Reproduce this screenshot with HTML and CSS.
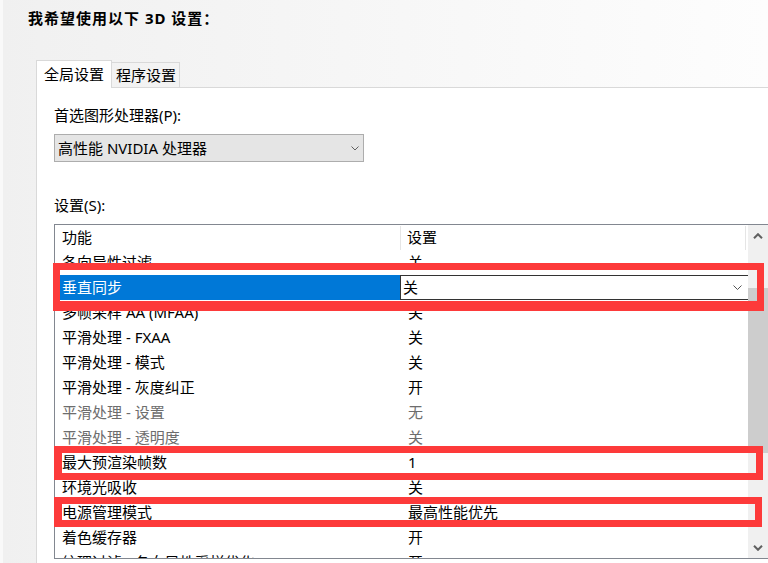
FILE: index.html
```html
<!DOCTYPE html>
<html lang="zh-CN">
<head>
<meta charset="utf-8">
<title>3D 设置</title>
<link rel="stylesheet" href="styles.css">
</head>
<body>
<div class="page">
  <h1 class="title">我希望使用以下 3D 设置：</h1>
  <div class="tabbar">
    <div class="tab active">全局设置</div>
    <div class="tab">程序设置</div>
  </div>
  <div class="panel">
    <div class="label">首选图形处理器(P):</div>
    <div class="select">
      <span>高性能 NVIDIA 处理器</span>
      <svg class="chev" width="8" height="5" viewBox="0 0 8 5"><polyline points="0.5,0.5 4,4 7.5,0.5" fill="none" stroke="#606060" stroke-width="1"/></svg>
    </div>
    <div class="label second">设置(S):</div>
    <div class="listbox">
      <div class="list">
        <div class="head">
          <div class="hc name">功能</div>
          <div class="sep"></div>
          <div class="hc val">设置</div>
          <div class="sep"></div>
          <div></div>
        </div>
        <div class="row"><div class="name">各向异性过滤</div><div class="val">关</div></div>
        <div class="row sel"><div class="name">垂直同步</div><div class="val"><span>关</span><svg width="9" height="5" viewBox="0 0 9 5"><polyline points="0.5,0.5 4.5,4.5 8.5,0.5" fill="none" stroke="#555" stroke-width="1"/></svg></div></div>
        <div class="row"><div class="name">多帧采样 AA (MFAA)</div><div class="val">关</div></div>
        <div class="row"><div class="name">平滑处理 - FXAA</div><div class="val">关</div></div>
        <div class="row"><div class="name">平滑处理 - 模式</div><div class="val">关</div></div>
        <div class="row"><div class="name">平滑处理 - 灰度纠正</div><div class="val">开</div></div>
        <div class="row dim"><div class="name">平滑处理 - 设置</div><div class="val">无</div></div>
        <div class="row dim"><div class="name">平滑处理 - 透明度</div><div class="val">关</div></div>
        <div class="row"><div class="name">最大预渲染帧数</div><div class="val">1</div></div>
        <div class="row"><div class="name">环境光吸收</div><div class="val">关</div></div>
        <div class="row"><div class="name">电源管理模式</div><div class="val">最高性能优先</div></div>
        <div class="row"><div class="name">着色缓存器</div><div class="val">开</div></div>
        <div class="row"><div class="name">纹理过滤 - 各向异性采样优化</div><div class="val">开</div></div>
      </div>
      <div class="scrollbar">
        <div class="sb-btn"><svg width="10" height="6" viewBox="0 0 10 6"><polyline points="1,5.2 5,1.2 9,5.2" fill="none" stroke="#606060" stroke-width="2"/></svg></div>
        <div class="track"><div class="thumb"></div></div>
        <div class="sb-btn"><svg width="10" height="6" viewBox="0 0 10 6"><polyline points="1,0.8 5,4.8 9,0.8" fill="none" stroke="#606060" stroke-width="2"/></svg></div>
      </div>
    </div>
  </div>
  <div class="mark m1"></div>
  <div class="mark m2"></div>
  <div class="mark m3"></div>
</div>
</body>
</html>
```
FILE: styles.css
```css
* { box-sizing: border-box; }
html, body { margin: 0; padding: 0; }
body {
  font-family: "Noto Sans", "Noto Sans CJK SC", sans-serif;
  font-size: 15px;
  color: #000;
}
.page {
  position: relative;
  width: 768px;
  height: 563px;
  overflow: hidden;
  display: flex;
  flex-direction: column;
  background: linear-gradient(90deg, #f9f9f9 0, #f9f9f9 3px, #f0f0f0 3px, #f1f1f1 40px, #fdfdfd 100%);
}
.title {
  margin: 0;
  padding: 8px 0 0 28px;
  font-size: 15px;
  line-height: 20px;
  font-weight: 700;
  letter-spacing: 1px;
}
.tabbar {
  display: flex;
  align-items: flex-end;
  margin: 32px 0 0 36px;
  height: 27px;
  position: relative;
  z-index: 1;
}
.tab {
  height: 25px;
  line-height: 24px;
  padding: 0 3px 0 4px;
  border: 1px solid #d9d9d9;
  border-left: none;
  border-bottom: none;
  white-space: nowrap;
}
.tab.active {
  height: 28px;
  margin-bottom: -1px;
  padding: 0 7px;
  border-left: 1px solid #d9d9d9;
  background: #fff;
  line-height: 27px;
}
.panel {
  flex: 1;
  margin-left: 36px;
  background: #fff;
  border-top: 1px solid #d9d9d9;
  border-left: 1px solid #d9d9d9;
  padding: 17px 0 0 17px;
}
.label { line-height: 20px; white-space: nowrap; }
.label.second { margin-top: 33px; }
.select {
  margin-top: 9px;
  width: 310px;
  height: 28px;
  border: 1px solid #adadad;
  background: #e5e5e5;
  display: flex;
  align-items: center;
  justify-content: space-between;
  padding: 0 4px 0 3px;
  line-height: 26px;
}
.listbox {
  margin-top: 9px;
  width: 715px;
  height: 335px;
  border: 1px solid #828790;
  display: flex;
  background: #fff;
}
.list {
  width: 693px;
  overflow: hidden;
}
.head {
  display: grid;
  grid-template-columns: 345px 1px 344px 1px 1fr;
  height: 25px;
  line-height: 25px;
}
.head .sep { background: #e5e5e5; margin-top: 1px; }
.hc.name { padding-left: 7px; }
.hc.val { padding-left: 6px; }
.row {
  display: grid;
  grid-template-columns: 345px 1fr;
  height: 25px;
  line-height: 25px;
}
.row .name { padding-left: 7px; white-space: nowrap; }
.row .val { padding-left: 8px; white-space: nowrap; }
.row.dim { color: #6d6d6d; }
.row.sel .name { background: #0078d7; color: #fff; }
.row.sel .val {
  background: #fff;
  border: 1px solid #333;
  border-right: none;
  padding: 0 6px 0 2px;
  display: flex;
  align-items: center;
  justify-content: space-between;
  line-height: 23px;
}
.scrollbar {
  width: 20px;
  background: #f0f0f0;
  display: flex;
  flex-direction: column;
}
.sb-btn {
  height: 21px;
  display: flex;
  align-items: center;
  justify-content: center;
}
.track { flex: 1; }
.thumb {
  margin-top: 42px;
  height: 165px;
  background: #cdcdcd;
}
.mark {
  position: absolute;
  border: 7px solid #fd3a3a;
}
.m1 { left: 53px; top: 263px; width: 711px; height: 48px; border-bottom-width: 10px; }
.m2 { left: 54px; top: 446px; width: 709px; height: 34px; border-left-width: 8px; }
.m3 { left: 54px; top: 497px; width: 708px; height: 30px; border-left-width: 8px; }
```
